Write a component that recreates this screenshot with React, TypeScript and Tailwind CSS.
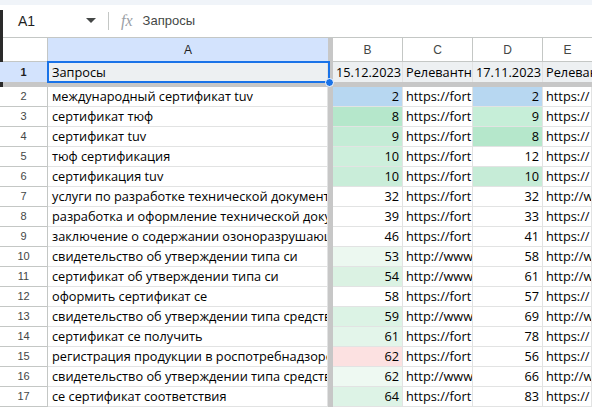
type Row = {
  n: number;
  query: string;
  b: number;
  bBg?: string;
  c: string;
  d: number;
  dBg?: string;
  e: string;
};

const rows: Row[] = [
  { n: 2, query: 'международный сертификат tuv', b: 2, bBg: 'bg-[#b7d7f1]', c: 'https://fort', d: 2, dBg: 'bg-[#b7d7f1]', e: 'https://' },
  { n: 3, query: 'сертификат тюф', b: 8, bBg: 'bg-[#b5e7cb]', c: 'https://fort', d: 9, dBg: 'bg-[#c6eed8]', e: 'https://' },
  { n: 4, query: 'сертификат tuv', b: 9, bBg: 'bg-[#c4ecd6]', c: 'https://fort', d: 8, dBg: 'bg-[#b5e7cb]', e: 'https://' },
  { n: 5, query: 'тюф сертификация', b: 10, bBg: 'bg-[#cdefdc]', c: 'https://fort', d: 12, e: 'https://' },
  { n: 6, query: 'сертификация tuv', b: 10, bBg: 'bg-[#c9edd9]', c: 'https://fort', d: 10, dBg: 'bg-[#c6ecd7]', e: 'https://' },
  { n: 7, query: 'услуги по разработке технической документации', b: 32, c: 'https://fort', d: 32, e: 'http://www' },
  { n: 8, query: 'разработка и оформление технической документации', b: 39, c: 'https://fort', d: 33, e: 'https://' },
  { n: 9, query: 'заключение о содержании озоноразрушающих веществ', b: 46, c: 'https://fort', d: 41, e: 'https://' },
  { n: 10, query: 'свидетельство об утверждении типа си', b: 53, bBg: 'bg-[#ecf8f0]', c: 'http://www', d: 58, e: 'http://www' },
  { n: 11, query: 'сертификат об утверждении типа си', b: 54, bBg: 'bg-[#dbf2e3]', c: 'http://www', d: 61, e: 'http://www' },
  { n: 12, query: 'оформить сертификат се', b: 58, c: 'https://fort', d: 57, e: 'https://' },
  { n: 13, query: 'свидетельство об утверждении типа средств измерений', b: 59, bBg: 'bg-[#dcf3e5]', c: 'http://www', d: 69, e: 'http://www' },
  { n: 14, query: 'сертификат се получить', b: 61, bBg: 'bg-[#e3f5ea]', c: 'https://fort', d: 78, e: 'https://' },
  { n: 15, query: 'регистрация продукции в роспотребнадзоре', b: 62, bBg: 'bg-[#fce1e1]', c: 'https://fort', d: 56, e: 'https://' },
  { n: 16, query: 'свидетельство об утверждении типа средств измерений', b: 62, bBg: 'bg-[#eef9f2]', c: 'http://www', d: 66, e: 'http://www' },
  { n: 17, query: 'се сертификат соответствия', b: 64, bBg: 'bg-[#ddf3e6]', c: 'https://fort', d: 83, e: 'https://' },
];

const cell = 'h-full overflow-hidden whitespace-nowrap border-r border-b border-[#e2e3e3] leading-[19px]';
const cellFont = { fontFamily: '"Open Sans", "Liberation Sans", sans-serif' };

function FreezeBar() {
  return <div className="h-full w-[5px] shrink-0 bg-[#c7c7c7]" />;
}

export default function App() {
  return (
    <div className="relative h-[408px] w-[592px] overflow-hidden bg-white text-[13px] text-black" style={{ fontFamily: '"Liberation Sans", Arial, sans-serif' }}>
      {/* left window edge */}
      <div className="absolute left-0 top-[10px] h-[77px] w-[3px] bg-[#2a2a2a]" />

      {/* formula bar */}
      <div className="h-[5px] bg-[#f0f4f9]" />
      <div className="flex h-[33px] items-center border-b border-[#c4c7c5]">
        <div className="flex w-[108px] items-center pl-[18px] pr-[12px]">
          <span className="text-[14px] text-[#1f1f1f]">A1</span>
          <svg className="ml-auto" width="10" height="6" viewBox="0 0 10 6">
            <path d="M0 0h10L5 5z" fill="#444746" />
          </svg>
        </div>
        <div className="h-[18px] w-px bg-[#c4c7c5]" />
        <span className="ml-[12px] text-[16px] italic text-[#9aa0a6]" style={{ fontFamily: '"Liberation Serif", serif' }}>fx</span>
        <span className="ml-[10px] text-[13px] text-[#444746]">Запросы</span>
      </div>

      {/* column headers */}
      <div className="flex h-[24px] text-[12px] text-[#444746]">
        <div className="h-full w-[48px] shrink-0 border-r border-b border-[#c4c7c5]" />
        <div className="flex h-full w-[280px] shrink-0 items-center justify-center border-b border-[#c4c7c5] bg-[#d3e3fd] text-[#1f1f1f]">A</div>
        <FreezeBar />
        {['B', 'C', 'D'].map((l) => (
          <div key={l} className="flex h-full w-[70px] shrink-0 items-center justify-center border-r border-b border-[#c4c7c5]">{l}</div>
        ))}
        <div className="flex h-full flex-1 items-center justify-center border-b border-[#c4c7c5]">E</div>
      </div>

      {/* row 1 */}
      <div className="relative flex h-[20px] bg-[#edf0f2] text-[12.75px]" style={cellFont}>
        <div className="flex h-full w-[48px] shrink-0 items-center justify-center border-r border-[#c4c7c5] bg-[#d3e3fd] text-[11px] font-bold text-[#1f1f1f]" style={{ fontFamily: '"Liberation Sans", Arial, sans-serif' }}>1</div>
        <div className="h-full w-[280px] shrink-0 overflow-hidden whitespace-nowrap border-r border-[#e2e3e3] pl-[4px] leading-[20px]">Запросы</div>
        <FreezeBar />
        <div className="h-full w-[70px] shrink-0 overflow-hidden whitespace-nowrap border-r border-[#e2e3e3] pl-[3px] leading-[20px]">15.12.2023</div>
        <div className="h-full w-[70px] shrink-0 overflow-hidden whitespace-nowrap border-r border-[#e2e3e3] pl-[3px] leading-[20px]">Релевантные</div>
        <div className="h-full w-[70px] shrink-0 overflow-hidden whitespace-nowrap border-r border-[#e2e3e3] pl-[3px] leading-[20px]">17.11.2023</div>
        <div className="h-full flex-1 overflow-hidden whitespace-nowrap pl-[3px] leading-[20px]">Релевантные</div>

        {/* selection */}
        <div className="pointer-events-none absolute left-[47px] top-[-1px] h-[22px] w-[283px] border-2 border-[#1a73e8]" />
        <div className="absolute left-[325px] top-[16px] h-[9px] w-[9px] rounded-full border border-white bg-[#1a73e8]" />
      </div>

      {/* horizontal freeze bar */}
      <div className="h-[5px] bg-[#c7c7c7]" />

      {rows.map((r) => (
        <div key={r.n} className="flex h-[20px] text-[12.75px]" style={cellFont}>
          <div className="flex h-full w-[48px] shrink-0 items-center justify-center border-r border-b border-[#c4c7c5] text-[11px] text-[#444746]" style={{ fontFamily: '"Liberation Sans", Arial, sans-serif' }}>{r.n}</div>
          <div className={`${cell} w-[280px] shrink-0 pl-[4px]`}>{r.query}</div>
          <FreezeBar />
          <div className={`${cell} w-[70px] shrink-0 pr-[3px] text-right ${r.bBg ?? ''}`}>{r.b}</div>
          <div className={`${cell} w-[70px] shrink-0 pl-[3px]`}>{r.c}</div>
          <div className={`${cell} w-[70px] shrink-0 pr-[3px] text-right ${r.dBg ?? ''}`}>{r.d}</div>
          <div className={`${cell} flex-1 pl-[3px]`}>{r.e}</div>
        </div>
      ))}
    </div>
  );
}
